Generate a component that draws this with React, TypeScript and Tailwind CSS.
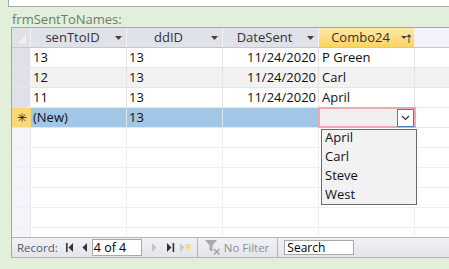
import React from "react";

const rows = [
  { id: "13", dd: "13", date: "11/24/2020", name: "P Green" },
  { id: "12", dd: "13", date: "11/24/2020", name: "Carl" },
  { id: "11", dd: "13", date: "11/24/2020", name: "April" },
];

const HeaderArrow: React.FC = () => (
  <svg width="7" height="4" viewBox="0 0 7 4">
    <polygon points="0,0 7,0 3.5,4" fill="#444" />
  </svg>
);

const SortArrow: React.FC = () => (
  <svg width="11" height="10" viewBox="0 0 11 10">
    <polygon points="0,3 6,3 3,6" fill="#444" />
    <rect x="7.5" y="2" width="1" height="8" fill="#444" />
    <polygon points="5.5,4 8,1 10.5,4" fill="#444" />
  </svg>
);

const HeaderCell: React.FC<{ label: string; active?: boolean }> = ({ label, active }) => (
  <div
    className={
      "w-[96px] h-full flex items-center border-r border-[#f4f4f4] " +
      (active ? "bg-gradient-to-b from-[#fee9a6] to-[#fbd35f]" : "bg-[#dfe2e8]")
    }
  >
    <span className="flex-1 text-center pl-[4px] text-[#333]">{label}</span>
    <span className="w-[16px] flex items-center justify-center">
      {active ? <SortArrow /> : <HeaderArrow />}
    </span>
  </div>
);

const App: React.FC = () => {
  return (
    <div
      className="relative w-[449px] h-[269px] overflow-hidden bg-[#e2efda] text-[13px] text-[#111]"
      style={{ fontFamily: '"Open Sans", "Noto Sans", sans-serif' }}
    >
      {/* top form strip */}
      <div className="ml-[8px] h-[7px] bg-white border-l border-b border-[#a9a9a9]" />

      <div className="h-[20px] pt-[4px] pl-[12px] leading-[16px] text-[#6e7c6c]">frmSentToNames:</div>

      {/* datasheet */}
      <div className="ml-[11px] border-l border-t border-[#a6a6a6] bg-white">
        <div className="h-[209px] overflow-hidden">
          {/* header */}
          <div className="flex h-[20px] border-b border-[#c8c8c8] leading-[19px]">
            <div className="w-[19px] h-full bg-[#dfe2e8] border-r border-[#f4f4f4] flex items-end justify-end pr-[3px] pb-[3px]">
              <svg width="11" height="11" viewBox="0 0 11 11">
                <polygon points="11,0 11,11 0,11" fill="#eceef2" stroke="#cfd3da" strokeWidth="0.6" />
              </svg>
            </div>
            <HeaderCell label="senTtoID" />
            <HeaderCell label="ddID" />
            <HeaderCell label="DateSent" />
            <HeaderCell label="Combo24" active />
            <div className="flex-1 bg-[#f1f2fb]" />
          </div>

          {rows.map((r, i) => (
            <div
              key={r.id}
              className={
                "flex h-[20px] border-b border-[#e6e6e6] leading-[19px] " +
                (i === 1 ? "bg-[#f2f2f2]" : "bg-white")
              }
            >
              <div className="w-[19px] h-full bg-[#dee1e7] border-r border-[#f6f6f6]" />
              <div className="w-[96px] pl-[2px] border-r border-[#e3e3e3]">{r.id}</div>
              <div className="w-[96px] pl-[2px] border-r border-[#e3e3e3]">{r.dd}</div>
              <div className="w-[96px] pr-[2px] text-right border-r border-[#e3e3e3]">{r.date}</div>
              <div className="w-[96px] pl-[3px] border-r border-[#e3e3e3]">{r.name}</div>
              <div className="flex-1" />
            </div>
          ))}

          {/* new record row */}
          <div className="flex h-[20px] border-b border-[#e6e6e6] leading-[19px]">
            <div className="w-[19px] h-full bg-[#fcd874] flex items-center justify-center text-[12px] text-[#222]">
              ✳
            </div>
            <div className="w-[96px] pl-[2px] bg-[#a0c6e8] border-r border-[#e3e3e3]">(New)</div>
            <div className="w-[96px] pl-[2px] bg-[#a0c6e8] border-r border-[#e3e3e3]">13</div>
            <div className="w-[96px] bg-[#a0c6e8] border-r border-[#e3e3e3]" />
            <div className="relative w-[96px] bg-[#f0f0f0]">
              <div className="absolute -left-px -top-px -right-px -bottom-[1px] border-2 border-[#f2a6ad]" />
              <div className="absolute right-[1px] top-[1px] w-[17px] h-[18px] bg-white border border-[#3f84cc] flex items-center justify-center">
                <svg width="9" height="6" viewBox="0 0 9 6">
                  <polyline points="1,1 4.5,4.5 8,1" fill="none" stroke="#333" strokeWidth="1.2" />
                </svg>
              </div>
            </div>
            <div className="flex-1" />
          </div>

          {/* empty rows */}
          {[0, 1, 2, 3, 4, 5].map((k) => (
            <div key={k} className="flex h-[20px] border-b border-[#efefef]">
              <div className="w-[19px] h-full bg-[#f4f5fb] border-r border-[#e6e7ef]" />
              <div className="w-[96px] border-r border-[#efefef]" />
              <div className="w-[96px] border-r border-[#efefef]" />
              <div className="w-[96px] border-r border-[#efefef]" />
              <div className="w-[96px] border-r border-[#efefef]" />
              <div className="flex-1" />
            </div>
          ))}
        </div>

        {/* navigation bar */}
        <div className="flex items-center h-[21px] border-t border-b border-[#b4b4b4] bg-gradient-to-b from-[#f1f2f6] to-[#e3e5eb] text-[11.5px]">
          <span className="ml-[5px] text-[#4b5a70]">Record:</span>
          <span className="ml-[7px] w-[10px] flex justify-center">
            <svg width="8" height="9" viewBox="0 0 8 9">
              <rect x="0" y="0" width="1.6" height="9" fill="#333" />
              <polygon points="7,0 7,9 2.5,4.5" fill="#333" />
            </svg>
          </span>
          <span className="ml-[6px] w-[8px] flex justify-center">
            <svg width="5" height="9" viewBox="0 0 5 9">
              <polygon points="5,0 5,9 0.5,4.5" fill="#333" />
            </svg>
          </span>
          <div className="ml-[3px] w-[50px] h-[17px] bg-white border border-[#a9a9a9] pl-[1px] leading-[15px] text-[12.5px] text-black">
            4 of 4
          </div>
          <span className="ml-[9px] w-[8px] flex justify-center">
            <svg width="5" height="9" viewBox="0 0 5 9">
              <polygon points="0,0 0,9 4.5,4.5" fill="#c2c4c8" />
            </svg>
          </span>
          <span className="ml-[7px] w-[10px] flex justify-center">
            <svg width="8" height="9" viewBox="0 0 8 9">
              <polygon points="0,0 0,9 4.5,4.5" fill="#333" />
              <rect x="5.6" y="0" width="1.6" height="9" fill="#333" />
            </svg>
          </span>
          <span className="ml-[4px] w-[12px] flex justify-center">
            <svg width="11" height="9" viewBox="0 0 11 9">
              <polygon points="0,0 0,9 4.5,4.5" fill="#c8cacd" />
              <rect x="5" y="1" width="6" height="6" fill="#f1e3b0" />
              <rect x="6" y="2" width="1" height="1" fill="#e6c96e" />
              <rect x="8" y="2" width="1" height="1" fill="#e6c96e" />
              <rect x="7" y="4" width="1" height="1" fill="#e6c96e" />
              <rect x="9" y="4" width="1" height="1" fill="#e6c96e" />
            </svg>
          </span>
          <span className="ml-[5px] w-px h-[20px] bg-[#b4b4b4]" />
          <span className="ml-[7px] w-[16px] flex justify-center">
            <svg width="16" height="15" viewBox="0 0 16 15">
              <polygon points="0,0 12,0 7.5,5.5 7.5,12 4.5,10 4.5,5.5" fill="#a7a9ad" />
              <line x1="9" y1="9" x2="14.5" y2="14.5" stroke="#9a9ca0" strokeWidth="1.3" />
              <line x1="14.5" y1="9" x2="9" y2="14.5" stroke="#9a9ca0" strokeWidth="1.3" />
            </svg>
          </span>
          <span className="ml-[3px] text-[#8e9094]">No Filter</span>
          <span className="ml-[8px] w-px h-[20px] bg-[#b4b4b4]" />
          <div className="ml-[6px] w-[70px] h-[15px] bg-white border border-[#a9a9a9] pl-[2px] leading-[13px] text-[12px] text-black">
            Search
          </div>
          <div className="flex-1" />
        </div>
      </div>

      {/* open combo list */}
      <div className="absolute left-[321px] top-[129px] w-[96px] h-[76px] bg-[#f2f2f2] border border-[#6b6b6b]">
        {["April", "Carl", "Steve", "West"].map((n) => (
          <div key={n} className="h-[19px] leading-[15px] pl-[3px] text-[13px] text-[#111]">
            {n}
          </div>
        ))}
      </div>
    </div>
  );
};

export default App;
